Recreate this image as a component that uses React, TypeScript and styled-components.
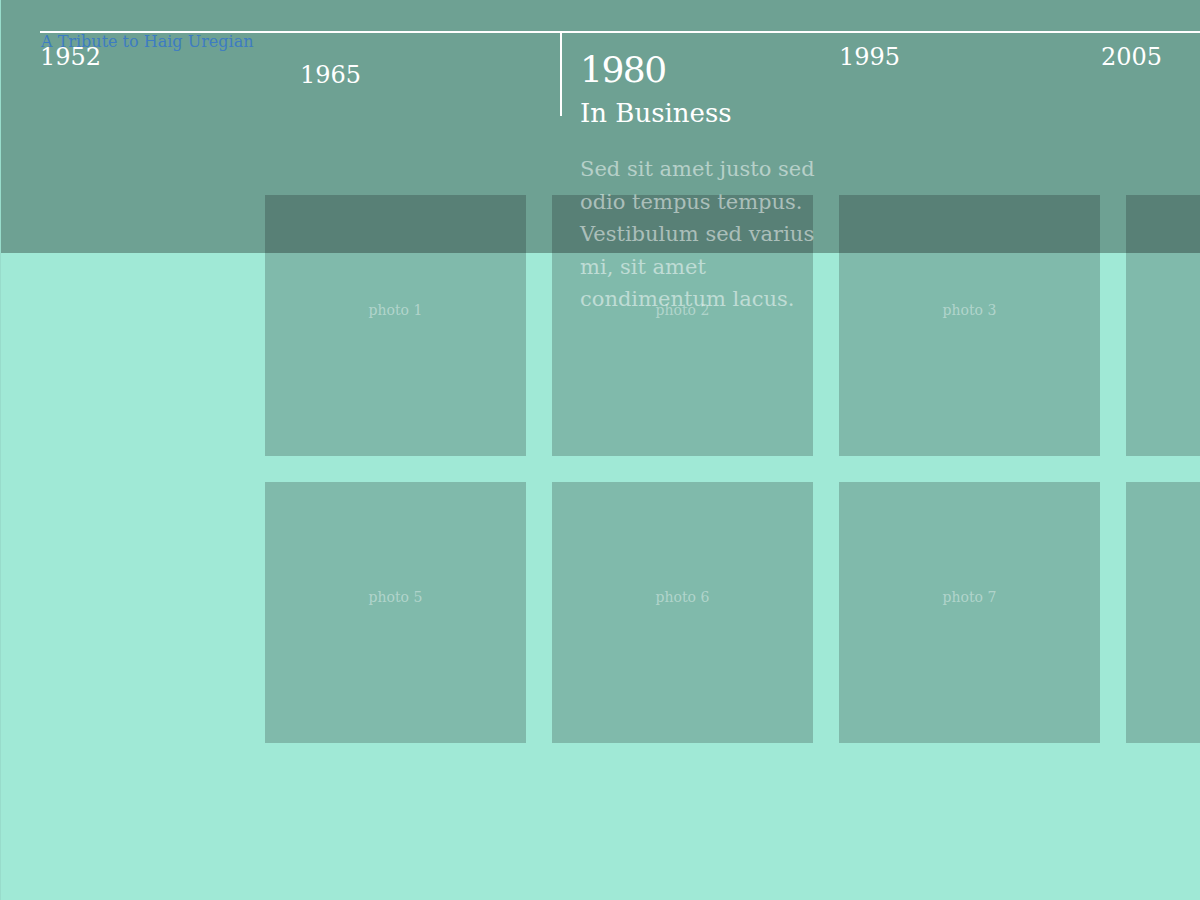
import React from 'react'
import styled, { createGlobalStyle } from 'styled-components'

const GlobalStyle = createGlobalStyle`
    html, body {
        margin: 0;
        padding: 0;
        background: #a0e9d6;
    }

    body {
        font-family: 'DejaVu Serif', 'Liberation Serif', serif;
    }
`

const Page = styled.div`
    position: relative;
    width: 1200px;
    height: 900px;
    overflow: hidden;
    background: #a0e9d6;
    border-left: 1px solid #98dccb;
    box-sizing: border-box;
`

const PhotoGrid = styled.div`
    display: grid;
    grid-template-columns: repeat(4, 261px);
    grid-auto-rows: 261px;
    column-gap: 26px;
    row-gap: 26px;
    padding: 195px 0 0 264px;
`

const Photo = styled.div`
    background: rgba(0, 0, 0, 0.2);
    color: rgba(255, 255, 255, 0.4);
    font-size: 14px;
    font-weight: 300;
    line-height: 20px;
    text-align: center;
    padding-top: 105px;
    box-sizing: border-box;
`

const Header = styled.header`
    position: absolute;
    top: 0;
    left: 0;
    right: 0;
    height: 253px;
    background: rgba(0, 0, 0, 0.31);
`

const Tribute = styled.h1`
    position: absolute;
    top: 31px;
    left: 40px;
    margin: 0;
    font-size: 16px;
    font-weight: normal;
    line-height: 22px;
    color: #3d7cc2;
    white-space: nowrap;
`

const Timeline = styled.ol`
    display: flex;
    list-style: none;
    margin: 31px 0 0 39px;
    padding: 0;
    border-top: 2px solid #ffffff;
`

const Stop = styled.li<{ offsetX: number; offsetY: number }>`
    flex: 0 0 260px;
    box-sizing: border-box;
    padding-left: ${(p) => p.offsetX}px;
    padding-top: ${(p) => p.offsetY}px;
    color: #ffffff;
`

const ActiveStop = styled.li`
    position: relative;
    flex: 0 0 260px;
    box-sizing: border-box;
    padding: 12px 0 0 20px;
    color: #ffffff;

    &::before {
        content: '';
        position: absolute;
        top: 0;
        left: 0;
        width: 2px;
        height: 83px;
        background: #ffffff;
    }
`

const Year = styled.div<{ active?: boolean }>`
    font-size: ${(p) => (p.active ? '36px' : '24px')};
    line-height: ${(p) => (p.active ? '50px' : '40px')};
    letter-spacing: ${(p) => (p.active ? '-1.5px' : '0')};
    white-space: nowrap;
`

const Title = styled.div`
    margin-top: 3px;
    font-size: 26px;
    line-height: 30px;
    white-space: nowrap;
`

const Story = styled.p`
    margin: 25px 0 0;
    font-size: 21px;
    line-height: 32.5px;
    color: rgba(255, 255, 255, 0.5);
    white-space: nowrap;
`

const photos = ['photo 1', 'photo 2', 'photo 3', 'photo 4', 'photo 5', 'photo 6', 'photo 7', 'photo 8']

export default function App() {
    return (
        <>
            <GlobalStyle />
            <Page>
                <PhotoGrid>
                    {photos.map((label) => (
                        <Photo key={label}>{label}</Photo>
                    ))}
                </PhotoGrid>
                <Header>
                    <Timeline>
                        <Stop offsetX={0} offsetY={4}>
                            <Year>1952</Year>
                        </Stop>
                        <Stop offsetX={0} offsetY={22}>
                            <Year>1965</Year>
                        </Stop>
                        <ActiveStop>
                            <Year active>1980</Year>
                            <Title>In Business</Title>
                            <Story>
                                Sed sit amet justo sed
                                <br />
                                odio tempus tempus.
                                <br />
                                Vestibulum sed varius
                                <br />
                                mi, sit amet
                                <br />
                                condimentum lacus.
                            </Story>
                        </ActiveStop>
                        <Stop offsetX={19} offsetY={4}>
                            <Year>1995</Year>
                        </Stop>
                        <Stop offsetX={21} offsetY={4}>
                            <Year>2005</Year>
                        </Stop>
                    </Timeline>
                    <Tribute>A Tribute to Haig Uregian</Tribute>
                </Header>
            </Page>
        </>
    )
}
